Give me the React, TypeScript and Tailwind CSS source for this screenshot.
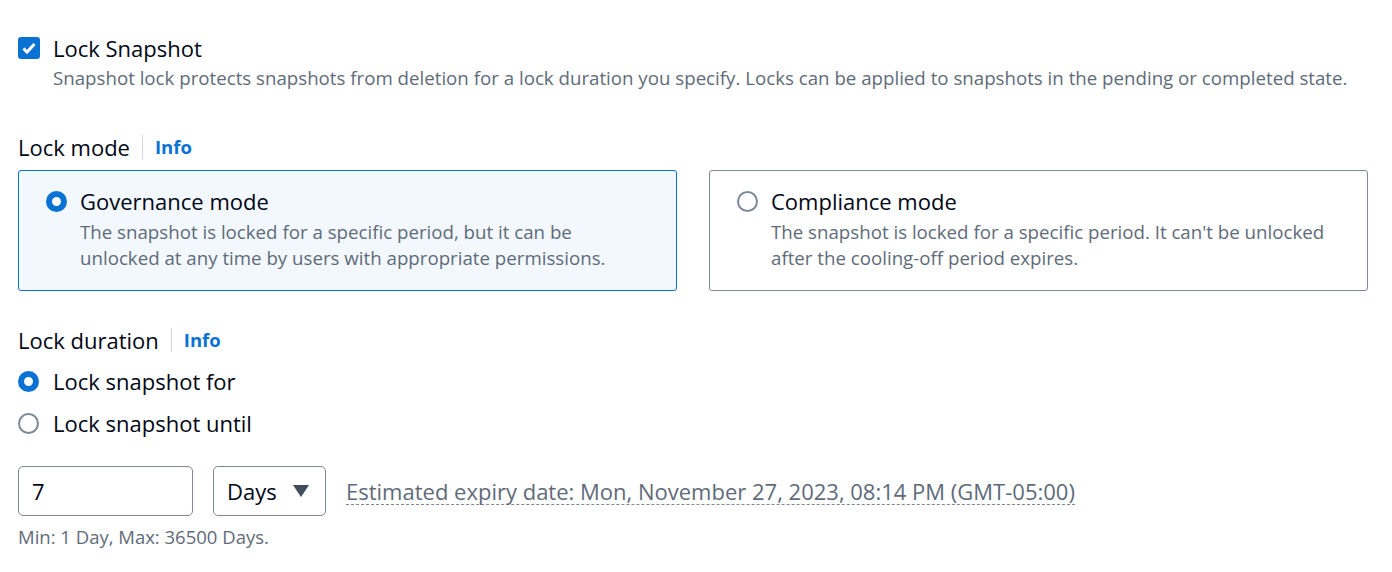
import React, { useState } from "react";

const font = { fontFamily: '"Open Sans", "Noto Sans", sans-serif' };

const Radio = ({ checked }: { checked: boolean }) =>
  checked ? (
    <span className="block w-[21px] h-[21px] rounded-full border-[6px] border-[#0972d3] bg-white shrink-0" />
  ) : (
    <span className="block w-[21px] h-[21px] rounded-full border-2 border-[#7d8998] bg-white shrink-0" />
  );

const Label = ({ title }: { title: string }) => (
  <div className="flex items-center h-[28px]">
    <span className="text-[22px] text-[#000716]">{title}</span>
    <span className="mx-[12px] w-px h-[24px] bg-[#d1d5db]" />
    <span className="text-[18.5px] font-bold text-[#0972d3]">Info</span>
  </div>
);

const ModeCard = ({
  title,
  desc,
  selected,
}: {
  title: string;
  desc: string[];
  selected: boolean;
}) => (
  <div
    className={
      selected
        ? "flex-1 h-[121px] rounded-[3px] border border-[#0972d3] bg-[#f2f8fd] pl-[27px] pt-[17px]"
        : "flex-1 h-[121px] rounded-[3px] border border-[#7d8998] bg-white pl-[27px] pt-[17px]"
    }
  >
    <div className="flex items-start gap-[13px]">
      <div className="pt-[3px]">
        <Radio checked={selected} />
      </div>
      <div>
        <div className="text-[22px] leading-[26px] text-[#000716]">{title}</div>
        <div className="text-[18.7px] leading-[26px] text-[#5f6b7a] mt-[5px]">
          {desc.map((d) => (
            <div key={d}>{d}</div>
          ))}
        </div>
      </div>
    </div>
  </div>
);

export default function App() {
  const [days, setDays] = useState("7");
  return (
    <div className="w-[1392px] h-[572px] bg-white pl-[18px] pt-[35px]" style={font}>
      <div className="w-[1350px]">
        <div className="flex items-start gap-[13px]">
          <span className="mt-[2px] w-[22px] h-[22px] rounded-[3px] bg-[#0972d3] flex items-center justify-center shrink-0">
            <svg width="18" height="18" viewBox="0 0 18 18">
              <path d="M3.5 9.5l3.5 3.5L14.5 5" fill="none" stroke="white" strokeWidth="3" />
            </svg>
          </span>
          <div>
            <div className="text-[22px] leading-[26px] text-[#000716]">Lock Snapshot</div>
            <div className="text-[18.7px] leading-[26px] text-[#5f6b7a] mt-[4px] whitespace-nowrap">
              Snapshot lock protects snapshots from deletion for a lock duration you specify. Locks can be applied to snapshots in the pending or completed state.
            </div>
          </div>
        </div>

        <div className="mt-[42px]">
          <Label title="Lock mode" />
        </div>
        <div className="flex gap-[32px] mt-[9px]">
          <ModeCard
            title="Governance mode"
            selected
            desc={[
              "The snapshot is locked for a specific period, but it can be",
              "unlocked at any time by users with appropriate permissions.",
            ]}
          />
          <ModeCard
            title="Compliance mode"
            selected={false}
            desc={[
              "The snapshot is locked for a specific period. It can't be unlocked",
              "after the cooling-off period expires.",
            ]}
          />
        </div>

        <div className="mt-[35px]">
          <Label title="Lock duration" />
        </div>
        <div className="mt-[14px] flex flex-col gap-[16px]">
          <div className="flex items-center gap-[14px] h-[26px]">
            <Radio checked />
            <span className="text-[22px] text-[#000716]">Lock snapshot for</span>
          </div>
          <div className="flex items-center gap-[14px] h-[26px]">
            <Radio checked={false} />
            <span className="text-[22px] text-[#000716]">Lock snapshot until</span>
          </div>
        </div>

        <div className="mt-[30px] flex items-center gap-[20px]">
          <input
            value={days}
            onChange={(e) => setDays(e.target.value)}
            className="w-[175px] h-[50px] rounded-[5px] border border-[#7d8998] px-[13px] text-[22px] text-[#000716] outline-none"
            style={font}
          />
          <div className="w-[113px] h-[50px] rounded-[5px] border border-[#7d8998] flex items-center justify-between pl-[13px] pr-[15px]">
            <span className="text-[22px] text-[#000716]">Days</span>
            <svg width="18" height="14" viewBox="0 0 18 14">
              <path d="M1 1h16L9 13z" fill="#414d5c" />
            </svg>
          </div>
          <span className="text-[22px] text-[#5f6b7a] border-b border-dashed border-[#7d8998] leading-[26px]">
            Estimated expiry date: Mon, November 27, 2023, 08:14 PM (GMT-05:00)
          </span>
        </div>
        <div className="mt-[7px] text-[18.5px] text-[#5f6b7a]">Min: 1 Day, Max: 36500 Days.</div>
      </div>
    </div>
  );
}
